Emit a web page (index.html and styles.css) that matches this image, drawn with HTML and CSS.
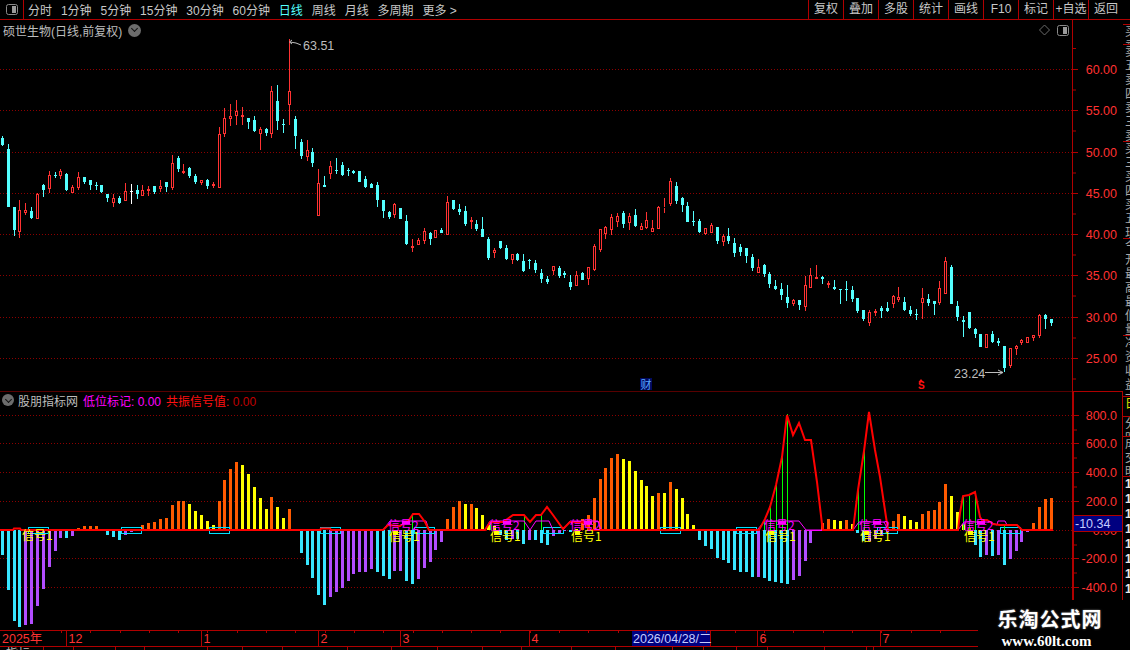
FILE: index.html
```html
<!DOCTYPE html>
<html>
<head>
    <title>硕世生物</title>
    <link rel="stylesheet" href="styles.css">
</head>
<body>
    <div class="screen">
        <div class="toolbar">
            <div class="panel-toggle">
                <svg width="12" height="11" viewBox="0 0 12 11"><rect x="0.5" y="0.5" width="11" height="10" rx="2" fill="none" stroke="#8a8a8a"/><rect x="6" y="2" width="4" height="7" fill="#9a9a9a"/></svg>
            </div>
            <div class="periods">
                <span>分时</span>
                <span>1分钟</span>
                <span>5分钟</span>
                <span>15分钟</span>
                <span>30分钟</span>
                <span>60分钟</span>
                <span class="active">日线</span>
                <span>周线</span>
                <span>月线</span>
                <span>多周期</span>
                <span>更多 &gt;</span>
            </div>
            <div class="tools">
                <span>复权</span>
                <span>叠加</span>
                <span>多股</span>
                <span>统计</span>
                <span>画线</span>
                <span>F10</span>
                <span>标记</span>
                <span>+自选</span>
                <span>返回</span>
            </div>
        </div>

        <div class="workspace">
            <div class="charts">
                <section class="pane price-pane">
                    <div class="pane-title">
                        <span class="stock-name">硕世生物(日线,前复权)</span>
                        <span class="chevron"></span>
                    </div>
                    <svg id="priceChart" class="chart" width="1123" height="371" viewBox="0 20 1123 371"></svg>
                </section>
                <section class="pane indicator-pane">
                    <div class="pane-title indicator-title">
                        <span class="chevron"></span>
                        <span class="stock-name">股朋指标网</span>
                        <span class="low-mark">低位标记: 0.00</span>
                        <span class="signal-value">共振信号值: <i>0.00</i></span>
                    </div>
                    <svg id="indicatorChart" class="chart" width="1123" height="239" viewBox="0 391 1123 239"></svg>
                </section>
                <svg id="dateAxis" class="chart" width="1123" height="20" viewBox="0 630 1123 20"></svg>
            </div>

            <div class="side-strip">
                <div class="side-row row-1"></div>
                <div class="side-row row-2">买卖</div>
                <div class="side-row row-3">卖五卖四卖三卖二卖一买一买二</div>
                <div class="side-row row-3">买三买四买五现价涨跌涨幅总量</div>
                <div class="side-row row-3">今开最高最低量比外盘内盘换手</div>
                <div class="side-row row-4">净资收益市盈</div>
                <div class="side-row row-5">日</div>
                <div class="side-row row-2">分时</div>
                <div class="side-row row-6">成交明细</div>
                <div class="side-row row-7">11111111</div>
            </div>
        </div>

        <div class="watermark">
            <div class="mark-name">乐淘公式网</div>
            <div class="mark-site">www.60lt.com</div>
        </div>
    </div>
    <script src="script.js"></script>
</body>
</html>
```

FILE: styles.css
```css
body {
    margin: 0;
    background-color: #000;
    color: #c8c8c8;
    font-family: "Liberation Sans", "Noto Sans CJK SC", sans-serif;
    font-size: 12px;
}

.screen {
    position: relative;
    width: 1130px;
    height: 650px;
    overflow: hidden;
    background-color: #000;
}

/* top bar */
.toolbar {
    display: flex;
    align-items: center;
    height: 19px;
    border-bottom: 1px solid #b00000;
}

.panel-toggle {
    display: flex;
    align-items: center;
    justify-content: center;
    box-sizing: border-box;
    width: 24px;
    height: 19px;
    border-right: 1px solid #b00000;
}

.periods {
    display: flex;
    gap: 8.9px;
    padding-left: 4px;
}

.periods .active {
    color: #54ffff;
}

.tools {
    display: flex;
    margin-left: auto;
    padding-right: 7px;
}

.tools span {
    box-sizing: border-box;
    width: 35px;
    height: 19px;
    line-height: 19px;
    text-align: center;
    border-left: 1px solid #b00000;
    white-space: nowrap;
}

/* chart panes */
.workspace {
    display: flex;
}

.charts {
    display: flex;
    flex-direction: column;
    width: 1123px;
}

.pane {
    position: relative;
    height: 371px;
}

.indicator-pane {
    height: 239px;
}

.chart {
    display: block;
}

.pane-title {
    position: absolute;
    top: 3px;
    left: 3px;
    display: flex;
    align-items: center;
    gap: 6px;
    height: 14px;
    white-space: nowrap;
}

.indicator-title {
    left: 2px;
    top: 2px;
    gap: 5px;
}

.indicator-title .chevron {
    width: 12px;
    height: 12px;
    margin-right: -1px;
}

.stock-name {
    color: #bdbdbd;
}

.low-mark {
    color: #ff00ff;
}

.signal-value {
    color: #ff1010;
}

.signal-value i {
    font-style: normal;
    color: #c00000;
}

.chevron {
    display: inline-block;
    position: relative;
    width: 13px;
    height: 13px;
    border-radius: 50%;
    background-color: #6c6c6c;
}

.chevron::after {
    content: "";
    position: absolute;
    left: 3.5px;
    top: 2.5px;
    width: 4px;
    height: 4px;
    border-right: 1px solid #111;
    border-bottom: 1px solid #111;
    transform: rotate(45deg);
}

/* svg text */
.axis-label {
    fill: #ff3232;
    font-size: 12.5px;
    text-anchor: end;
}

.price-note {
    fill: #bdbdbd;
    font-size: 12.5px;
}

.signal-one {
    fill: #ffff00;
    font-size: 12px;
    font-family: "Noto Sans CJK SC", sans-serif;
}

.signal-two {
    fill: #ff00ff;
    font-size: 12px;
    font-family: "Noto Sans CJK SC", sans-serif;
}

.date-label {
    fill: #ff3232;
    font-size: 12.5px;
}

.date-current {
    fill: #c4ccff;
    font-size: 12.5px;
}

.finance-flag {
    fill: #5aa8ff;
    font-size: 11px;
}

.sell-flag {
    fill: #ff1010;
    font-size: 10px;
    font-weight: bold;
}

.cut-text {
    fill: #bdbdbd;
    font-size: 12px;
}

/* clipped panel on the right edge */
.side-strip {
    width: 7px;
    height: 580px;
    overflow: hidden;
}

.side-row {
    box-sizing: border-box;
    width: 7px;
    overflow: hidden;
    padding-left: 2px;
    line-height: 14px;
    color: #a8a8a8;
    border-bottom: 1px solid #b00000;
    word-break: break-all;
}

.row-1 { height: 5px; }
.row-2 { height: 20px; }
.row-3 { height: 97px; }
.row-4 { height: 61px; }
.row-5 { height: 20px; color: #e0e000; }
.row-6 { height: 40px; }
.row-7 {
    height: 123px;
    border-bottom: none;
    color: #e8e8e8;
    font-weight: bold;
    line-height: 15px;
}

/* logo block over the bottom right corner */
.watermark {
    position: absolute;
    right: 0;
    bottom: 0;
    width: 152px;
    height: 50px;
    background-color: #000;
    color: #fff;
    text-align: center;
}

.mark-name {
    margin: 6px 0 0 -8px;
    font-family: "Noto Sans CJK SC", sans-serif;
    font-weight: bold;
    font-size: 20px;
    line-height: 26px;
    letter-spacing: 1px;
    text-shadow: 0 0 2px #888;
}

.mark-site {
    margin: 2px 0 0 -15px;
    font-family: "Liberation Serif", serif;
    font-weight: bold;
    font-size: 15px;
    line-height: 14px;
}
```

FILE: script.js
```js
// candles traced from the chart: [high, top, bottom, low, type], r = red, c = cyan, w = white
// first block is offset from y=100, second from y=170, both in thirds of a pixel
var candlesA = [
    [108,113,135,138,'c'],[132,147,320,320,'c'],[321,321,390,408,'c'],[300,330,395,414,'r'],[309,331,339,345,'r'],
    [321,333,354,357,'c'],[280,282,356,356,'r'],[252,255,270,290,'c'],[213,225,266,279,'r'],[216,225,228,234,'c'],
    [207,213,228,236,'r'],[220,222,270,273,'c'],[255,262,278,279,'r'],[216,232,263,270,'r'],[232,232,246,252,'c'],
    [240,240,255,270,'c'],[246,255,258,270,'c'],[255,255,276,279,'c'],[282,282,294,306,'c'],[282,294,308,320,'r'],
    [288,294,309,312,'c'],[249,274,302,303,'r'],[252,273,275,312,'w'],[255,270,282,297,'c'],[255,271,287,288,'r'],
    [258,267,273,288,'r'],[258,258,276,282,'c'],[240,259,267,276,'r'],[246,246,261,276,'c'],[165,190,263,270,'r'],
    [168,174,207,216,'c'],[192,213,219,222,'r'],[201,204,228,234,'c'],[222,228,246,252,'c'],[240,241,249,255,'r'],
    [237,240,258,267,'c'],[247,252,258,264,'r'],[81,102,263,263,'r'],[24,54,102,111,'r'],[12,48,57,78,'r'],
    [0,33,48,75,'r'],[21,45,51,75,'r'],[54,54,66,87,'c'],[48,60,93,96,'c'],[81,87,102,150,'r'],
    [84,87,99,108,'c'],[-42,-27,102,114,'r'],[-45,3,63,90,'c'],[57,72,75,99,'c'],[-183,-27,15,75,'r'],
    [48,57,108,147,'c'],[117,126,168,177,'c'],[120,150,171,183,'r'],[144,156,189,201,'c'],[207,249,348,348,'r'],
    [228,255,261,261,'c'],[183,198,222,237,'r'],[174,210,213,222,'c']
];
var candlesB = [
    [-24,-15,15,18,'c'],[-6,0,3,18,'c'],[0,3,9,12,'c'],[3,3,36,36,'c'],[18,27,51,54,'c'],
    [39,42,54,54,'c'],[36,45,90,111,'c'],[90,90,123,144,'c'],[123,126,141,147,'c'],[99,102,135,144,'r'],
    [114,114,147,147,'c'],[135,153,222,225,'c'],[207,228,234,246,'r'],[204,210,225,225,'r'],[174,183,213,222,'r'],
    [186,189,207,225,'c'],[180,181,204,204,'r'],[174,180,189,189,'c'],[78,96,195,195,'r'],[90,90,117,120,'c'],
    [102,117,126,135,'c'],[108,123,162,168,'c'],[141,150,156,177,'r'],[150,162,177,183,'c'],[141,177,201,201,'c'],
    [201,207,264,270,'c'],[234,240,249,264,'r'],[213,213,234,237,'c'],[225,234,267,270,'c'],[252,252,270,282,'r'],
    [249,252,270,273,'c'],[252,273,303,306,'c'],[267,270,273,297,'c'],[270,279,300,309,'c'],[297,309,327,339,'c'],
    [318,327,336,342,'c'],[289,289,304,315,'r'],[288,294,318,324,'c'],[303,309,315,324,'c'],[315,336,351,360,'c'],
    [303,316,347,348,'r'],[306,309,330,330,'c'],[291,292,326,345,'r'],[222,228,300,303,'r'],[177,177,240,246,'r'],
    [168,171,192,207,'r'],[132,141,180,195,'r'],[129,138,156,171,'r'],[123,129,162,174,'c'],[129,138,159,180,'r'],
    [117,135,168,171,'c'],[159,168,180,180,'r'],[126,150,174,177,'r'],[150,174,186,186,'r'],[108,111,177,177,'r'],
    [84,111,114,129,'r'],[24,33,102,108,'r'],[36,48,93,102,'c'],
    [81,84,105,126,'c'],[96,108,156,156,'c'],[123,153,156,168,'c'],[147,153,186,189,'c'],[174,175,192,195,'r'],
    [159,165,189,189,'r'],[171,171,213,222,'c'],[192,198,216,228,'r'],[174,198,213,222,'c'],[204,219,249,261,'c'],
    [222,231,246,258,'c'],[234,234,258,279,'c'],[252,261,294,303,'c'],[267,291,309,309,'r'],[282,285,312,321,'c'],
    [306,312,342,354,'c'],[330,348,357,360,'c'],[339,357,375,390,'c'],[345,381,399,414,'c'],[387,390,402,408,'r'],
    [390,390,405,420,'c'],[318,345,411,423,'r'],[294,316,353,353,'r'],[285,321,327,327,'s'],[318,321,327,342,'c'],
    [333,339,345,354,'r'],[330,351,357,360,'c'],[357,357,360,402,'c'],[333,357,360,393,'c'],[348,360,387,396,'c'],
    [384,384,423,429,'c'],[420,420,447,453,'c'],[420,427,459,468,'r'],[417,423,429,438,'r'],[408,414,423,444,'c'],
    [396,414,423,426,'c'],[375,378,402,414,'r'],[351,381,390,396,'r'],[381,396,420,423,'c'],[408,420,432,438,'c'],
    [417,432,435,450,'c'],[354,384,399,447,'r'],[372,387,399,408,'c'],[393,393,402,435,'c'],[333,354,399,405,'r'],
    [261,273,372,372,'r'],[285,291,402,402,'c'],[393,408,441,453,'c'],[438,450,456,501,'c'],[426,426,474,477,'c'],
    [474,477,492,504,'c'],[492,492,531,531,'c'],[492,492,534,534,'r'],[483,492,516,519,'c'],[504,514,519,528,'c'],
    [528,528,594,606,'c'],[534,534,588,594,'r'],[525,528,537,555,'r'],[507,510,519,525,'r'],[501,501,519,519,'r'],
    [495,495,504,513,'r'],[432,435,498,504,'r'],[432,435,447,477,'c'],[447,447,459,468,'c']
];

// histogram runs: colour, then bar heights in px (up is positive)
var barRuns = [
    ['c',-25,-60,-91,-97],['p',-95,-94,-76,-59,-37,-21,-8],['c',-8],['p',-6],['o',2,4,4,4],['y',1],
    ['c',-5,-7,-10],['p',-5,-2],['o',1,5,7,8,11,12,25,29,29],['y',26,19,15,9,5],['o',29,50,61,68],
    ['y',65,56,43,32,21],['o',33],['y',23,12],['o',21],['y',1],
    ['c',-23,-35,-48,-65,-75],['p',-67,-62,-58,-51,-44,-42,-42,-39],['c',-42,-46,-49],['p',-41,-41],['c',-51,-54],
    ['p',-49,-38,-32,-20,-12],['o',11,23,29],['y',26],['o',26],['y',22,15,5,4],['c',-5,-10],['p',-9],['c',-9,-14],
    ['p',-10],['c',-10,-13,-15],['p',-6,-3,-1],['c',-2],['y',1],['o',11,15,32,51,62,72,76],['y',71,69,59,50,44,34],
    ['o',37],['y',37],['o',48],['y',41,32,16,5],['c',-10,-16,-19,-28,-30,-33,-40,-42,-42,-47],['p',-47],
    ['c',-48,-51,-52,-53,-54],['p',-50,-46,-31,-13,0],['o',7,11],['y',10,9],['o',10],['y',6],['c',-3,-11],
    ['p',-11,-9,-5,-2],['o',9,16],['y',14,10,8],['o',16,19,20,28,46],['y',34,18,6],['o',2],['c',-15,-27],['p',-25],
    ['c',-26],['p',-25],['c',-35],['p',-29,-21,-12,-2],['o',7,23,31,32]
];
var barColors = { c: '#38e6ff', p: '#b24dff', o: '#ff5a00', y: '#ffff00' };

// 共振信号值 line
var signalLine = '0,530 13,530 14,528.5 20,528.5 21,530 320,530 321,528.5 330,528.5 331,530 383,530 388,525 400,526 409,520 ' +
    '413,514 419,514 425,522 429,530 485,530 490,522 503,522 513,515 524,515 530,522 536,515 541,515 547,507 553,515 ' +
    '563,529 570,522 583,522 590,530 759,530 765,519 770,507 776,485 782,457 787,415 793,435 799,423 805,440 811,440 ' +
    '817,482 822,524 823,530 853,530 858,490 864,451 869,412 875,450 880,477 886,517 888,530 958,530 960,513 963,496 ' +
    '969,495 975,492 980,517 982,520 987,520 993,524 1000,525 1017,525 1022,530 1053,530';

// 低位标记 outlines
var lowMarks = [
    '383,530 390,521 426,521 429,530',
    '485,530 490,521 524,521 530,530 536,521 549,521 553,530',
    '563,530 570,521 598,521 601,530',
    '757,530 765,521 799,521 806,530 822,530',
    '853,530 859,522 884,522 888,530',
    '958,530 964,522 990,522 997,525 998,521 1005,521 1007,525'
];

var greenLines = [[412,514],[490,522],[524,515],[541,515],[764,519],[770,506],[776,485],[782,457],[787,414],
    [858,490],[864,451],[963,497],[969,496],[975,492],[1004,526]];
var cyanBoxes = [28,121,209,320,414,543,660,736,877,1000];
var signalLabels = [389,490,571,765,860,964];

var RED = '#b00000';
var GRID = '#8c0000';

function xAt(i) {
    return 2.3 + i * 5.86;
}

function hLine(x1, x2, y, color) {
    return '<line x1="' + x1 + '" x2="' + x2 + '" y1="' + y + '" y2="' + y + '" stroke="' + color + '"/>';
}

function vLine(x, y1, y2, color, width) {
    return '<line x1="' + x + '" x2="' + x + '" y1="' + y1 + '" y2="' + y2 + '" stroke="' + color + '" stroke-width="' + (width || 1) + '"/>';
}

function rect(x, y, w, h, fill) {
    return '<rect x="' + x + '" y="' + y + '" width="' + w + '" height="' + h + '" fill="' + fill + '"/>';
}

function gridLine(y) {
    return '<line x1="0" x2="1072" y1="' + y + '" y2="' + y + '" stroke="' + GRID + '" stroke-dasharray="1 2"/>';
}

function drawCandle(c, base, i) {
    var left = Math.round(xAt(i) - 1.5);
    var mid = left + 1.5;
    var hi = Math.round(base + c[0] / 3);
    var top = Math.round(base + c[1] / 3);
    var bot = Math.round(base + c[2] / 3);
    var lo = Math.round(base + c[3] / 3);
    var color = c[4] == 'c' ? '#54ffff' : c[4] == 'w' ? '#ffffff' : '#ff3232';
    var out = '';
    if (bot - top < 1) bot = top + 1;
    if (top > hi) out += vLine(mid, hi, top, color);
    if (lo > bot) out += vLine(mid, bot, lo, color);
    if (c[4] == 'r') {
        out += '<rect x="' + (left + 0.5) + '" y="' + (top + 0.5) + '" width="2" height="' + (bot - top - 1) + '" fill="#000" stroke="' + color + '"/>';
    } else {
        out += rect(left, top, 3, bot - top, color);
    }
    return out;
}

function drawPrice() {
    var prices = [['60.00', 69.5], ['55.00', 110.5], ['50.00', 152.5], ['45.00', 193.5], ['40.00', 234.5], ['35.00', 275.5], ['30.00', 317.5], ['25.00', 358.5]];
    var out = '';
    prices.forEach(function (p) {
        out += gridLine(p[1]);
        out += hLine(1073, 1078, p[1], RED);
        out += hLine(1073, 1076, p[1] + 20.5, RED);
        out += '<text class="axis-label" x="1117" y="' + (p[1] + 4.5) + '">' + p[0] + '</text>';
    });
    out += hLine(1073, 1076, 48.5, RED);
    candlesA.forEach(function (c, i) { out += drawCandle(c, 100, i); });
    candlesB.forEach(function (c, i) { out += drawCandle(c, 170, i + candlesA.length); });

    // high and low notes
    out += '<path d="M292 40 L289.5 42 L292 44 M290 42 L296 43 L301 45" fill="none" stroke="#bdbdbd"/>';
    out += '<text class="price-note" x="303" y="50">63.51</text>';
    out += '<text class="price-note" x="954" y="378">23.24</text>';
    out += '<path d="M985 372.5 H1003 M998 370 L1003 372.5 L998 375" fill="none" stroke="#bdbdbd"/>';

    // event flags
    out += rect(640, 378, 12, 12, '#000a60');
    out += '<text class="finance-flag" x="640.5" y="388.5">财</text>';
    out += '<path d="M921 379 L918.5 382 H923.5 Z" fill="#ff1010"/>';
    out += '<text class="sell-flag" x="918" y="389">S</text>';

    // corner icons
    out += '<path d="M1044.5 25 L1049.5 30 L1044.5 35 L1039.5 30 Z" fill="none" stroke="#6c6c6c"/>';
    out += '<rect x="1057.5" y="25.5" width="11" height="10" rx="2" fill="none" stroke="#8a8a8a"/>' + rect(1063, 27, 4, 7, '#9a9a9a');

    // frame
    out += vLine(1072.5, 20, 391, RED);
    out += vLine(1123.5, 20, 391, RED);
    document.getElementById('priceChart').innerHTML = out;
}

function drawIndicator() {
    var scale = [['800.0', 415.5], ['600.0', 443.5], ['400.0', 472.5], ['200.0', 501.5], ['0.00', 530.5], ['-200.0', 558.5], ['-400.0', 587.5]];
    var out = '';
    scale.forEach(function (s) {
        out += gridLine(s[1]);
        out += hLine(1074, 1079, s[1], RED);
        out += hLine(1074, 1077, s[1] + 14.5, RED);
        out += '<text class="axis-label" x="1117" y="' + (s[1] + 4.5) + '">' + s[0] + '</text>';
    });

    // histogram
    var i = 0;
    barRuns.forEach(function (run) {
        for (var j = 1; j < run.length; j++) {
            var h = run[j];
            var left = Math.round(xAt(i) - 1.5);
            if (h > 0) out += rect(left, 530 - h, 3, h, barColors[run[0]]);
            if (h < 0) out += rect(left, 530, 3, -h, barColors[run[0]]);
            i++;
        }
    });

    cyanBoxes.forEach(function (x) {
        out += '<rect x="' + (x + 0.5) + '" y="527.5" width="20" height="6" fill="none" stroke="#00e0ff"/>';
    });
    greenLines.forEach(function (g) {
        out += vLine(g[0] + 0.5, g[1], 530, '#00ff00');
    });
    lowMarks.forEach(function (m) {
        out += '<polyline points="' + m + '" fill="none" stroke="#ff00ff"/>';
    });
    out += hLine(806, 822, 530.5, '#ff00ff');
    out += '<polyline points="' + signalLine + '" fill="none" stroke="#ff0000" stroke-width="2"/>';

    // signal labels
    out += '<text class="signal-one" x="22" y="540">信号1</text>';
    signalLabels.forEach(function (x) {
        out += rect(x + 4, 530, 5, 5, '#ffff00');
        out += rect(x + 13, 521, 8, 3, '#ff00ff');
        out += '<text class="signal-one" x="' + x + '" y="541">信号1</text>';
        out += '<text class="signal-two" x="' + (x - 1) + '" y="530">信号2</text>';
    });

    // frame and current value box
    out += vLine(1073, 391, 600, RED, 2);
    out += vLine(1123, 391, 600, RED, 2);
    out += '<rect x="0" y="390.5" width="1072" height="1" fill="' + RED + '"/>' + rect(1072, 390, 52, 2, RED);
    out += rect(1074, 516, 48, 15, '#000080');
    out += hLine(1074, 1122, 515.5, RED) + hLine(1074, 1122, 531.5, RED);
    out += '<text class="date-current" x="1075" y="528">-10.34</text>';
    document.getElementById('indicatorChart').innerHTML = out;
}

function drawDates() {
    var cuts = [[66.5, '12'], [201.5, '1'], [318.5, '2'], [400.5, '3'], [529.5, '4'], [757.5, '6'], [880.5, '7']];
    var out = rect(632, 631, 78, 15, '#000080');
    for (var k = 1; k < 33; k++) {
        out += vLine(Math.round(xAt(k * 5)) + 0.5, 631, 633, RED);
    }
    out += hLine(0, 978, 630.5, RED) + hLine(0, 978, 646.5, RED);
    out += '<text class="date-label" x="2" y="643">2025年</text>';
    cuts.forEach(function (c) {
        out += vLine(c[0], 631, 646, RED);
        out += '<text class="date-label" x="' + (c[0] + 2) + '" y="643">' + c[1] + '</text>';
    });
    out += vLine(710.5, 631, 646, RED);
    out += '<text class="date-current" x="633" y="643">2026/04/28/二</text>';

    // next row, almost off the screen
    [43, 73, 115, 144, 207, 242, 282, 347, 391, 437, 482, 521, 571, 615, 672, 703, 736, 767, 824, 866, 873].forEach(function (x) {
        out += vLine(x + 0.5, 647, 650, RED);
    });
    out += '<text class="cut-text" x="6" y="658">指标</text>';
    document.getElementById('dateAxis').innerHTML = out;
}

drawPrice();
drawIndicator();
drawDates();
```
